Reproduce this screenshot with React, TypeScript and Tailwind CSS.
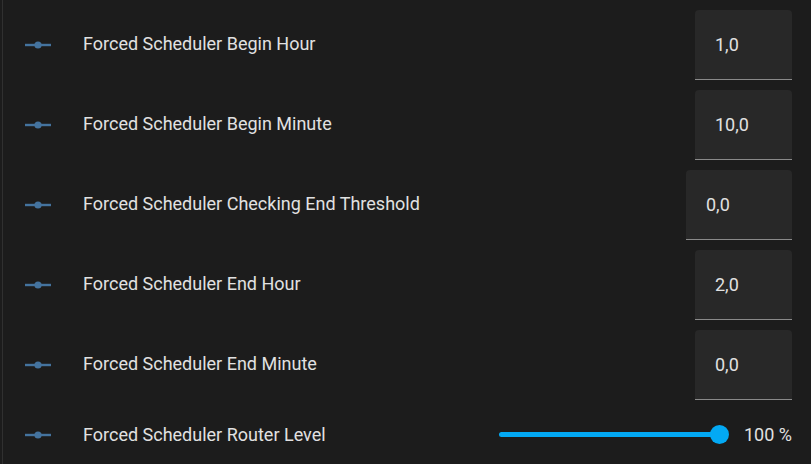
import React from "react";

const Icon = () => (
  <svg width="26" height="10" viewBox="0 0 26 10" className="block">
    <rect x="0" y="3.8" width="26" height="2.4" fill="#44739e" />
    <circle cx="13" cy="5" r="3.6" fill="#44739e" />
  </svg>
);

type Row = { label: string; value: string; w: string };

const rows: Row[] = [
  { label: "Forced Scheduler Begin Hour", value: "1,0", w: "w-[97px]" },
  { label: "Forced Scheduler Begin Minute", value: "10,0", w: "w-[97px]" },
  { label: "Forced Scheduler Checking End Threshold", value: "0,0", w: "w-[106px]" },
  { label: "Forced Scheduler End Hour", value: "2,0", w: "w-[97px]" },
  { label: "Forced Scheduler End Minute", value: "0,0", w: "w-[97px]" },
];

export default function App() {
  return (
    <div
      className="w-[811px] h-[464px] bg-[#1c1c1c] overflow-hidden pl-[2px]"
      style={{ fontFamily: "Roboto, 'Liberation Sans', sans-serif" }}
    >
      <div className="h-full border-l border-[#303030] pt-[10px] pr-[19px] text-[#e1e1e1]">
        {rows.map((r, i) => (
          <div
            key={r.label}
            className={`flex items-center h-[70px] ${i < 4 ? "mb-[10px]" : ""}`}
          >
            <div className="w-[22px] shrink-0" />
            <Icon />
            <div className="ml-[32px] flex-1 text-[18px] leading-6 -mt-[2px]">{r.label}</div>
            <div
              className={`${r.w} shrink-0 h-[70px] bg-[#282828] rounded-t-[4px] border-b border-[#8a8a8a] flex items-center pl-[20px] text-[18px]`}
            >
              {r.value}
            </div>
          </div>
        ))}
        <div className="flex items-center h-[70px]">
          <div className="w-[22px] shrink-0" />
          <Icon />
          <div className="ml-[32px] flex-1 text-[18px] leading-6">Forced Scheduler Router Level</div>
          <div className="relative shrink-0 w-[233px] h-[20px] mr-[14px]">
            <div className="absolute left-[2px] right-[10px] top-[7px] h-[5px] rounded-full bg-[#03a9f4]" />
            <div className="absolute right-[1px] top-[0px] w-[19px] h-[19px] rounded-full bg-[#03a9f4]" />
          </div>
          <div className="shrink-0 whitespace-nowrap text-[18px] leading-6">100 %</div>
        </div>
      </div>
    </div>
  );
}
